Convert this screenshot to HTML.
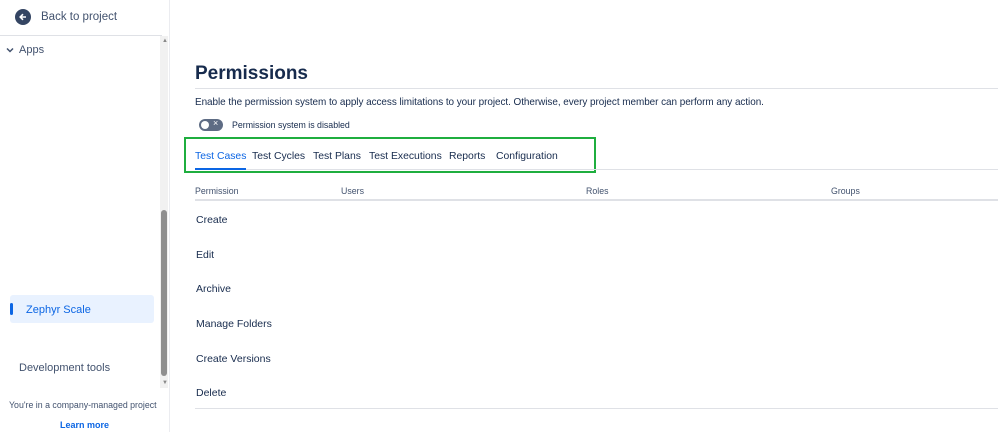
<!DOCTYPE html>
<html><head><style>
*{box-sizing:border-box;margin:0;padding:0}
body{width:998px;height:432px;overflow:hidden;background:#fff;font-family:"Liberation Sans",sans-serif;color:#42526e;position:relative}
.a{position:absolute;white-space:nowrap}
.t{font-size:10.4px;color:#172b4d;top:151px}
.r{font-size:10.5px;color:#172b4d}
</style></head><body>
<div class="a" style="left:0;top:0;width:170px;height:432px;background:#fff;border-right:1px solid #ebecf0"></div>
<div class="a" style="left:15px;top:9px;width:16px;height:16px;border-radius:50%;background:#344563"></div>
<svg class="a" style="left:15px;top:9px" width="16" height="16"><path d="M11 8H5.5M8 5.2L5.2 8 8 10.8" stroke="#fff" stroke-width="1.6" fill="none"/></svg>
<div class="a" style="left:41px;top:11px;font-size:11.5px;color:#42526e">Back to project</div>
<div class="a" style="left:0;top:35px;width:162px;height:1px;background:#dfe1e6"></div>
<svg class="a" style="left:6px;top:47px" width="8" height="6"><path d="M1 1.5L4 4.5 7 1.5" stroke="#42526e" stroke-width="1.5" fill="none"/></svg>
<div class="a" style="left:19px;top:44px;font-size:11px">Apps</div>
<div class="a" style="left:160px;top:36px;width:8px;height:352px;background:#f1f1f1"></div>
<div class="a" style="left:162px;top:38px;font-size:6px;color:#888">▲</div>
<div class="a" style="left:162px;top:380px;font-size:6px;color:#888">▼</div>
<div class="a" style="left:161px;top:210px;width:6px;height:166px;background:#8f8f8f;border-radius:3px"></div>
<div class="a" style="left:10px;top:295px;width:144px;height:28px;background:#e9f2ff;border-radius:3px"></div>
<div class="a" style="left:10px;top:303px;width:3px;height:12px;background:#0c66e4;border-radius:2px"></div>
<div class="a" style="left:26px;top:304px;font-size:11px;color:#0c66e4">Zephyr Scale</div>
<div class="a" style="left:19px;top:362px;font-size:11px">Development tools</div>
<div class="a" style="left:9px;top:400px;font-size:8.8px">You're in a company-managed project</div>
<div class="a" style="left:60px;top:420px;font-size:9px;color:#0c66e4;font-weight:bold">Learn more</div>

<div class="a" style="left:195px;top:63px;font-size:19px;font-weight:bold;color:#172b4d">Permissions</div>
<div class="a" style="left:195px;top:88px;width:803px;height:1px;background:#dfe1e6"></div>
<div class="a" style="left:195px;top:97px;font-size:10.1px;color:#172b4d;letter-spacing:-0.05px;transform-origin:0 0;transform:scaleX(0.985)">Enable the permission system to apply access limitations to your project. Otherwise, every project member can perform any action.</div>
<div class="a" style="left:199px;top:119px;width:24px;height:12px;border-radius:6px;background:#5e6c84"></div>
<div class="a" style="left:201px;top:121px;width:8px;height:8px;border-radius:50%;background:#fff"></div>
<div class="a" style="left:213px;top:118px;font-size:9px;color:#fff">×</div>
<div class="a" style="left:232px;top:120px;font-size:8.8px;color:#172b4d">Permission system is disabled</div>
<div class="a" style="left:184px;top:137px;width:412px;height:36px;border:2px solid #1fae3f"></div>
<div class="a" style="left:195px;top:169px;width:803px;height:1px;background:#dfe1e6"></div>
<div class="a t" style="left:195px;color:#0c66e4">Test Cases</div>
<div class="a" style="left:195px;top:168px;width:51px;height:2px;background:#0c66e4"></div>
<div class="a t" style="left:252px">Test Cycles</div>
<div class="a t" style="left:313px">Test Plans</div>
<div class="a t" style="left:369px">Test Executions</div>
<div class="a t" style="left:449px">Reports</div>
<div class="a t" style="left:496px">Configuration</div>
<div class="a" style="left:195px;top:186px;font-size:8.8px">Permission</div>
<div class="a" style="left:341px;top:186px;font-size:8.8px">Users</div>
<div class="a" style="left:586px;top:186px;font-size:8.8px">Roles</div>
<div class="a" style="left:831px;top:186px;font-size:8.8px">Groups</div>
<div class="a" style="left:195px;top:199px;width:803px;height:2px;background:#dfe1e6"></div>
<div class="a r" style="left:196px;top:214px">Create</div>
<div class="a r" style="left:196px;top:249px">Edit</div>
<div class="a r" style="left:196px;top:283px">Archive</div>
<div class="a r" style="left:196px;top:318px">Manage Folders</div>
<div class="a r" style="left:196px;top:353px">Create Versions</div>
<div class="a r" style="left:196px;top:387px">Delete</div>
<div class="a" style="left:195px;top:408px;width:803px;height:1px;background:#dfe1e6"></div>
</body></html>
